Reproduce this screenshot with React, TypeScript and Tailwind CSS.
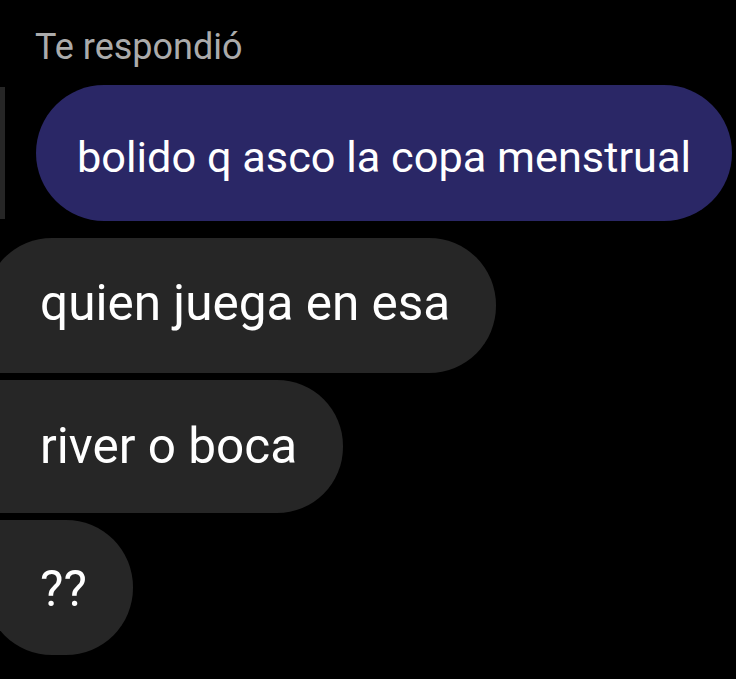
export default function App() {
  return (
    <div className="w-[736px] h-[679px] overflow-hidden bg-black font-['Roboto','Liberation_Sans',sans-serif]">
      <div className="pt-[26px] pl-[35px] text-[36px] leading-[42px] text-[#ababab]">Te respondió</div>
      <div className="mt-[17px] flex items-stretch">
        <div className="w-[5px] my-[2px] bg-[#262626]" />
        <div className="ml-[31px] rounded-full bg-[#2a2766] pl-[41px] pr-[41px] pt-[48px] pb-[38px] text-[43.3px] leading-[50px] text-white whitespace-nowrap">
          bolido q asco la copa menstrual
        </div>
      </div>
      <div className="mt-[17px] flex flex-col items-start gap-[7px] text-[49.5px] leading-[58px] text-white whitespace-nowrap">
        <div className="-ml-[15px] bg-[#262626] rounded-tl-[67px] rounded-bl-[14px] rounded-r-[67px] pl-[55px] pr-[46px] pt-[36px] pb-[41px]">
          quien juega en esa
        </div>
        <div className="-ml-[15px] bg-[#262626] rounded-l-[14px] rounded-r-[66px] pl-[55px] pr-[46px] pt-[37px] pb-[38px]">
          river o boca
        </div>
        <div className="-ml-[15px] bg-[#262626] rounded-tl-[14px] rounded-bl-[67px] rounded-r-[67px] pl-[55px] pr-[46px] pt-[40px] pb-[37px]">
          ??
        </div>
      </div>
    </div>
  );
}
